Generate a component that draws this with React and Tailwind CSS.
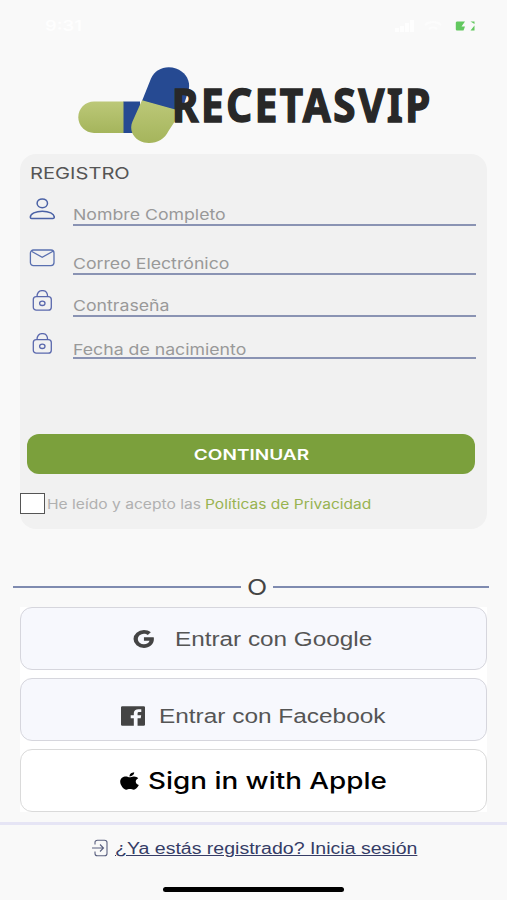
import React, { useState } from "react";
import clsx from "clsx";
import { BiLogoFacebookSquare, BiLogoGoogle } from "react-icons/bi";
import { FaApple } from "react-icons/fa";

const Wide = ({ center = false, className, children }) => (
  <span
    className={clsx(
      "inline-block shrink-0 whitespace-nowrap",
      center ? "origin-center" : "origin-left",
      className
    )}
  >
    {children}
  </span>
);

const UserIcon = () => (
  <svg viewBox="0 0 26 22" className="w-[26px] h-[22px]" fill="none" stroke="#4b62a6" strokeWidth="1.5">
    <ellipse cx="13.300" cy="5.300" rx="5.200" ry="4.400" />
    <path d="M13.300 13.200c-6.600 0-12 2.600-12 6 0 .8.500 1.200 1.300 1.200h21.400c.8 0 1.300-.4 1.300-1.200 0-3.400-5.400-6-12-6Z" />
  </svg>
);

const MailIcon = () => (
  <svg viewBox="0 0 26 18" className="w-[26px] h-[18px]" fill="none" stroke="#5a70b0" strokeWidth="1.3">
    <rect x="1.400" y="1" width="23.600" height="15.600" rx="3" />
    <path d="M2.400 2.200 13.200 8.300 24 2.200" />
  </svg>
);

const LockIcon = () => (
  <svg viewBox="0 0 20 22" className="w-5 h-[22px]" fill="none" stroke="#5a68ad" strokeWidth="1.3">
    <rect x="1.300" y="6.600" width="18" height="13.600" rx="3" />
    <path d="M5 6.600c0-3.600 1.900-6 5.300-6s5.300 2.400 5.300 6" />
    <ellipse cx="10.300" cy="13.300" rx="2.700" ry="2.200" />
  </svg>
);

const LoginIcon = () => (
  <svg viewBox="0 0 16 18" className="w-4 h-[18px]" fill="none" stroke="#5b6180" strokeWidth="1.1">
    <path d="M3 5.500V3.500C3 2 4 1.200 5.500 1.200h7c1.500 0 2.500.8 2.500 2.300v11c0 1.500-1 2.300-2.500 2.300h-7C4 16.800 3 16 3 14.500v-2" />
    <path d="M0 9h11.500M8 5.500 11.500 9 8 12.500" />
  </svg>
);

const Logo = () => (
  <div className="flex h-[76px] ml-[78px]">
    <svg viewBox="0 0 112 76" className="w-28 h-[76px] shrink-0">
      <defs>
        <linearGradient id="lime" x1="0" y1="0" x2="0" y2="1">
          <stop offset="0" stopColor="#bcc878" />
          <stop offset="1" stopColor="#a5b55c" />
        </linearGradient>
      </defs>
      <path d="M46 34.500H16a15.700 15.700 0 0 0 0 31.400h30Z" fill="url(#lime)" />
      <path d="M45.500 34.500H62V66H45.500Z" fill="#264a92" />
      <path d="M64 34 73 11.500C77 2 88 -2 98 1.500c10 3.500 15 13 12.500 22L103.500 45Z" fill="#264a92" />
      <path d="M64 33.200 54.500 54.500c-4 9 1.500 18.500 11.500 21 10 2 20-2 24.500-11.500L103.500 44.300Z" fill="url(#lime)" />
    </svg>
    <Wide className="mt-[4px] -ml-[18px] scale-x-[0.875] font-['Noto_Sans'] text-[46px] leading-[66px] font-bold tracking-[3px] text-[#282828] [-webkit-text-stroke:1.5px_#282828]">
      RECETASVIP
    </Wide>
  </div>
);

const FIELDS = [
  { icon: UserIcon, label: "Nombre Completo", row: "h-[38px]", iconBox: "pt-[10px]", text: "" },
  { icon: MailIcon, label: "Correo Electrónico", row: "h-[49px]", iconBox: "pt-[23px]", text: "" },
  { icon: LockIcon, label: "Contraseña", row: "h-[42px]", iconBox: "pt-[15px]", text: "" },
  { icon: LockIcon, label: "Fecha de nacimiento", row: "h-[42px]", iconBox: "pt-[16px]", text: "-mb-[2px]" },
];

const Field = ({ field }) => {
  const Icon = field.icon;
  return (
    <div className={clsx("flex pl-[9px] pr-[11px]", field.row)}>
      <div className={clsx("w-[26px] mr-[18px] flex justify-center items-start", field.iconBox)}>
        <Icon />
      </div>
      <div className="flex-1 flex items-end border-b-2 border-[#8a93b3]">
        <Wide className={clsx("scale-x-[1.18] text-[15px] leading-[18px] text-[#999999]", field.text)}>
          {field.label}
        </Wide>
      </div>
    </div>
  );
};

const App = () => {
  const [accepted, setAccepted] = useState(false);

  return (
    <div className="w-[507px] h-[900px] overflow-hidden flex flex-col bg-[#f9f9f9] font-['Inter',sans-serif]">
      <div className="h-[67px] shrink-0 flex items-start justify-between pt-[17px] pl-[45px] pr-[32px]">
        <Wide className="scale-x-[1.22] text-[15px] leading-[18px] font-semibold text-[#fefefe]">9:31</Wide>
        <div className="flex items-center gap-2 h-[18px]">
          <svg viewBox="0 0 20 12" className="w-5 h-3" fill="#fefefe">
            <path d="M0 8h4v4H0zM5 6h4v6H5zM10 3h4v9h-4zM15 0h4v12h-4z" />
          </svg>
          <svg viewBox="0 0 20 12" className="w-5 h-3 mr-1" fill="none" stroke="#fcfcfc" strokeWidth="2">
            <path d="M2 5c4-4 12-4 16 0M6 9c2-2 6-2 8 0" />
          </svg>
          <svg viewBox="0 0 20 10" className="w-5 h-[10px]" fill="#62c85f">
            <path d="M2.500.5H10L6.500 5.500H10L8.500 9.500h-6C1.300 9.500.8 9 .8 8V2C.8 1 1.300.5 2.500.5ZM15.500.5H19.500v2.500ZM19.500 4.500v5h-4Z" />
          </svg>
        </div>
      </div>

      <Logo />

      <section className="mt-[11px] mx-5 h-[375px] shrink-0 flex flex-col rounded-2xl bg-[#f1f1f1]">
        <h1 className="pl-[10px] pt-2 h-[34px] leading-[22px]">
          <Wide className="scale-x-[1.22] text-[16.5px] text-[#555555]">REGISTRO</Wide>
        </h1>
        {FIELDS.map((field) => (
          <Field key={field.label} field={field} />
        ))}
        <button className="mt-[75px] ml-[7px] mr-3 h-10 pt-[2px] shrink-0 rounded-xl bg-[#7ba03c] flex justify-center items-center">
          <Wide center className="scale-x-[1.27] text-[15px] font-semibold text-white">
            CONTINUAR
          </Wide>
        </button>
        <div className="mt-[19px] flex items-center h-5">
          <button
            role="checkbox"
            aria-checked={accepted}
            onClick={() => setAccepted(!accepted)}
            className="w-[25px] h-[21px] shrink-0 border border-[#555555] bg-white"
          />
          <div className="ml-[2px] w-[158px] pt-px leading-[18px]">
            <Wide className="scale-x-[1.2] text-[13px] text-[#b0b0b0]">He leído y acepto las</Wide>
          </div>
          <a href="#privacidad" className="pt-px leading-[18px]">
            <Wide className="scale-x-[1.195] text-[13px] text-[#98b350]">Políticas de Privacidad</Wide>
          </a>
        </div>
      </section>

      <div className="mt-[46px] h-6 shrink-0 flex items-center pl-[13px] pr-[18px]">
        <div className="flex-1 h-[2px] bg-[#7f8bb0]" />
        <div className="w-8 pt-[2px] flex justify-center">
          <Wide center className="scale-x-[1.26] text-[21px] leading-6 text-[#444444]">O</Wide>
        </div>
        <div className="w-[216px] h-[2px] bg-[#7f8bb0]" />
      </div>

      <div className="mt-[8px] mx-5 shrink-0 flex flex-col gap-2 bg-white">
        <button className="h-[63px] rounded-xl border border-[#d6d6dd] bg-[#f7f8fd] flex items-center pl-[109px] font-['Liberation_Sans']">
          <BiLogoGoogle preserveAspectRatio="none" className="w-[28px] h-6 text-[#444444]" />
          <Wide className="ml-[17px] scale-x-[1.215] text-[20px] text-[#555555]">Entrar con Google</Wide>
        </button>
        <button className="h-[63px] rounded-xl border border-[#d6d6dd] bg-[#f7f8fd] flex items-center pt-[13px] pl-[96px] font-['Liberation_Sans']">
          <BiLogoFacebookSquare preserveAspectRatio="none" className="w-8 h-[26px] text-[#444444]" />
          <Wide className="ml-[10px] scale-x-[1.22] text-[20px] text-[#555555]">Entrar con Facebook</Wide>
        </button>
        <button className="h-[63px] rounded-xl border border-[#dadada] bg-white flex items-center pl-[99px]">
          <FaApple preserveAspectRatio="none" className="w-[19px] h-5 text-black" />
          <Wide className="ml-[9px] pt-[2px] scale-x-[1.21] text-[23px] font-medium text-black">Sign in with Apple</Wide>
        </button>
      </div>

      <footer className="mt-[10px] flex-1 border-t-[3px] border-[#e6e5f5] flex flex-col">
        <a href="#login" className="mt-[12px] ml-[92px] h-[22px] flex items-center font-['Liberation_Sans']">
          <LoginIcon />
          <Wide className="mt-[2px] ml-[7px] scale-x-[1.22] text-[16px] leading-[22px] text-[#353c66] underline decoration-1 underline-offset-1">
            ¿Ya estás registrado? Inicia sesión
          </Wide>
        </a>
        <div className="mt-[28px] ml-[163px] w-[181px] h-[5px] rounded-full bg-black" />
      </footer>
    </div>
  );
};

export default App;
